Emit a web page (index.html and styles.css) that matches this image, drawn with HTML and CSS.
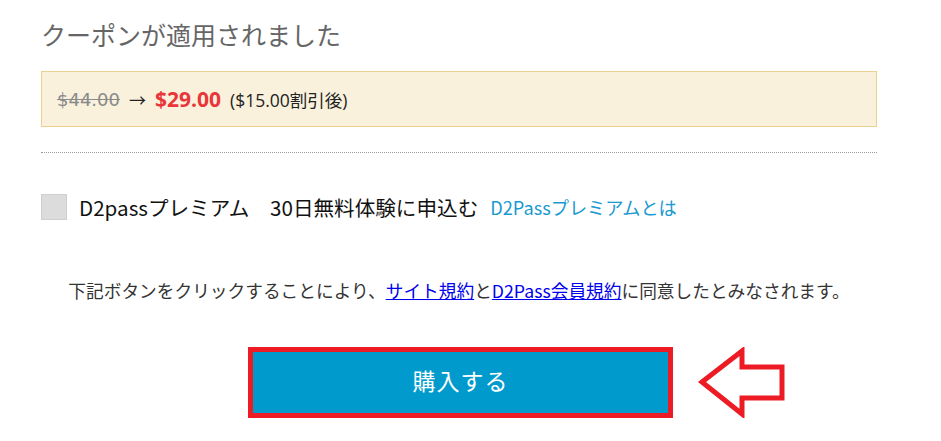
FILE: index.html
```html
<!DOCTYPE html>
<html lang="ja">
<head>
<meta charset="utf-8">
<link rel="stylesheet" href="styles.css">
</head>
<body>
<div class="wrap">
  <h2 class="title">クーポンが適用されました</h2>
  <div class="price-box">
    <del class="old">$44.00</del>
    <span class="arrow-t">→</span>
    <span class="new">$29.00</span>
    <span class="disc">($15.00割引後)</span>
  </div>
  <hr class="dots">
  <div class="premium">
    <span class="check"></span>
    <span class="premium-label">D2passプレミアム　30日無料体験に申込む</span>
    <a class="premium-link" href="#">D2Passプレミアムとは</a>
  </div>
  <p class="notice">下記ボタンをクリックすることにより、<a href="#">サイト規約</a>と<a href="#">D2Pass会員規約</a>に同意したとみなされます。</p>
  <div class="buy-row">
    <div class="buy-frame">
      <button class="buy">購入する</button>
      <svg class="pointer" width="90" height="72" viewBox="0 0 90 72">
        <polygon points="5,35 45,4 45,20 85,20 85,51 45,51 45,67" fill="none" stroke="#ed1c24" stroke-width="5" stroke-linejoin="miter"/>
      </svg>
    </div>
  </div>
</div>
</body>
</html>
```
FILE: styles.css
```css
html, body {
  margin: 0;
  padding: 0;
  background: #fff;
}
body {
  font-family: "Open Sans", "Noto Sans CJK JP", sans-serif;
  color: #222;
}
.wrap {
  width: 836px;
  padding: 16px 0 0 41px;
}
.title {
  margin: 0;
  font-size: 25px;
  font-weight: normal;
  line-height: 36px;
  color: #666;
  font-family: "Noto Sans CJK JP", sans-serif;
}
.price-box {
  margin-top: 19px;
  height: 54px;
  border: 1px solid #ead190;
  background: #f9f1dc;
  display: flex;
  align-items: center;
  padding-left: 15px;
  gap: 9px;
}
.old {
  font-size: 18px;
  font-family: "DejaVu Sans", sans-serif;
  color: #8a8a8a;
  text-decoration: line-through;
}
.arrow-t {
  font-size: 17px;
  color: #222;
}
.new {
  font-size: 21px;
  font-weight: bold;
  color: #e8363a;
}
.disc {
  font-size: 17.5px;
  color: #222;
  font-family: "Open Sans", "Noto Sans CJK JP", sans-serif;
}
.dots {
  margin: 25px 0 0 0;
  border: 0;
  border-top: 1px dotted #999;
  height: 0;
}
.premium {
  margin-top: 41px;
  height: 26px;
  display: flex;
  align-items: center;
}
.check {
  width: 24px;
  height: 24px;
  background: #dcdcdc;
  border: 1px solid #cfcfcf;
  flex: none;
}
.premium-label {
  margin-left: 12px;
  font-size: 20.6px;
  font-family: "Noto Sans CJK JP", sans-serif;
  color: #111;
  white-space: pre;
}
.premium-link {
  margin-left: 12px;
  font-size: 18.2px;
  color: #1a9ad0;
  text-decoration: none;
  font-family: "Noto Sans CJK JP", sans-serif;
}
.notice {
  margin: 58px 0 0 0;
  text-align: center;
  font-size: 17.7px;
  line-height: 24px;
  color: #333;
  font-family: "Noto Sans CJK JP", sans-serif;
}
.notice a {
  color: #0000ee;
  text-decoration: underline;
}
.buy-row {
  margin-top: 45px;
  display: flex;
  justify-content: center;
}
.buy-frame {
  position: relative;
  margin-left: 3px;
}
.buy {
  display: block;
  width: 425px;
  height: 71px;
  border: 5px solid #ed1c24;
  background: #009bcc;
  color: #fff;
  font-size: 23px;
  line-height: 54px;
  padding: 0 0 6px 0;
  font-family: "Noto Sans CJK JP", sans-serif;
  letter-spacing: 1px;
}
.pointer {
  position: absolute;
  left: 449px;
  top: 0;
}
```
